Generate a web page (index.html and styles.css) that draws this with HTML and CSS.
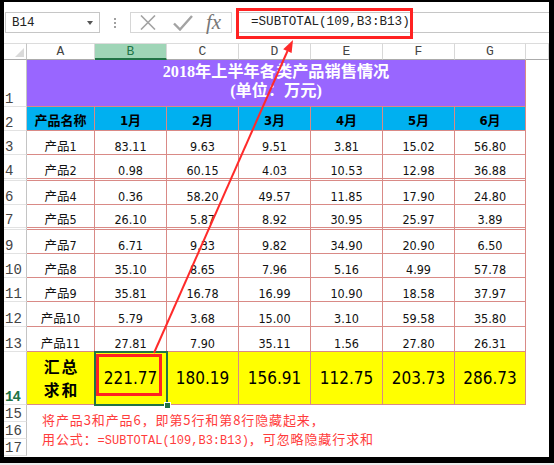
FILE: index.html
```html
<!DOCTYPE html>
<html lang="zh-CN">
<head>
<meta charset="utf-8">
<title>SUBTOTAL</title>
<link rel="stylesheet" href="styles.css">
</head>
<body>
<div class="frame">
  <div class="fbar">
    <div class="namebox"><span>B14</span><span class="caret"></span></div>
    <div class="dots"><i></i><i></i><i></i></div>
    <div class="fxbox">
      <svg class="ico-x" width="16" height="15" viewBox="0 0 16 15"><path d="M1 0.5 L15 14.5 M15 0.5 L1 14.5" stroke="#a3a3a3" stroke-width="1.6" fill="none"/></svg>
      <svg class="ico-ok" width="20" height="16" viewBox="0 0 20 16"><path d="M1 8.5 L7 14.5 L19 1" stroke="#a3a3a3" stroke-width="2.4" fill="none"/></svg>
      <span class="fx">fx</span>
    </div>
    <div class="finput">=SUBTOTAL(109,B3:B13)</div>
  </div>

  <div class="sheet">
    <div class="corner"><span class="tri"></span></div>
    <div class="ch">A</div><div class="ch chsel">B</div><div class="ch">C</div><div class="ch">D</div><div class="ch">E</div><div class="ch">F</div><div class="ch">G</div><div class="ch">&nbsp;</div>

    <div class="rh">1</div>
    <div class="c title"><span>2018年上半年各类产品销售情况</span><span>(单位：万元)</span></div>
    <div class="x"></div>

    <div class="rh">2</div>
    <div class="c hd">产品名称</div><div class="c hd">1月</div><div class="c hd">2月</div><div class="c hd">3月</div><div class="c hd">4月</div><div class="c hd">5月</div><div class="c hd">6月</div>
    <div class="x"></div>

    <div class="rh">3</div>
    <div class="c">产品1</div><div class="c">83.11</div><div class="c">9.63</div><div class="c">9.51</div><div class="c">3.81</div><div class="c">15.02</div><div class="c">56.80</div>
    <div class="x"></div>

    <div class="rh">4</div>
    <div class="c">产品2</div><div class="c">0.98</div><div class="c">60.15</div><div class="c">4.03</div><div class="c">10.53</div><div class="c">12.98</div><div class="c">36.88</div>
    <div class="x"></div>

    <div class="rh hid"></div>
    <div class="c"></div><div class="c"></div><div class="c"></div><div class="c"></div><div class="c"></div><div class="c"></div><div class="c"></div>
    <div class="x"></div>

    <div class="rh">6</div>
    <div class="c">产品4</div><div class="c">0.36</div><div class="c">58.20</div><div class="c">49.57</div><div class="c">11.85</div><div class="c">17.90</div><div class="c">24.80</div>
    <div class="x"></div>

    <div class="rh">7</div>
    <div class="c">产品5</div><div class="c">26.10</div><div class="c">5.87</div><div class="c">8.92</div><div class="c">30.95</div><div class="c">25.97</div><div class="c">3.89</div>
    <div class="x"></div>

    <div class="rh hid"></div>
    <div class="c"></div><div class="c"></div><div class="c"></div><div class="c"></div><div class="c"></div><div class="c"></div><div class="c"></div>
    <div class="x"></div>

    <div class="rh">9</div>
    <div class="c">产品7</div><div class="c">6.71</div><div class="c">9.33</div><div class="c">9.82</div><div class="c">34.90</div><div class="c">20.90</div><div class="c">6.50</div>
    <div class="x"></div>

    <div class="rh">10</div>
    <div class="c">产品8</div><div class="c">35.10</div><div class="c">8.65</div><div class="c">7.96</div><div class="c">5.16</div><div class="c">4.99</div><div class="c">57.78</div>
    <div class="x"></div>

    <div class="rh">11</div>
    <div class="c">产品9</div><div class="c">35.81</div><div class="c">16.78</div><div class="c">16.99</div><div class="c">10.90</div><div class="c">18.58</div><div class="c">37.97</div>
    <div class="x"></div>

    <div class="rh">12</div>
    <div class="c">产品10</div><div class="c">5.79</div><div class="c">3.68</div><div class="c">15.00</div><div class="c">3.10</div><div class="c">59.58</div><div class="c">35.80</div>
    <div class="x"></div>

    <div class="rh">13</div>
    <div class="c">产品11</div><div class="c">27.81</div><div class="c">7.90</div><div class="c">35.11</div><div class="c">1.56</div><div class="c">27.80</div><div class="c">26.31</div>
    <div class="x"></div>

    <div class="rh rhsel">14</div>
    <div class="c sum sumlbl"><span>汇总</span><span>求和</span></div><div class="c sum">221.77</div><div class="c sum">180.19</div><div class="c sum">156.91</div><div class="c sum">112.75</div><div class="c sum">203.73</div><div class="c sum">286.73</div>
    <div class="x"></div>

    <div class="rh">15</div>
    <div class="note"><div>将产品3和产品6，即第5行和第8行隐藏起来，</div><div>用公式：<span class="mono">=SUBTOTAL(109,B3:B13)</span>，可忽略隐藏行求和</div></div>
    <div class="x"></div>
    <div class="rh">16</div>
    <div class="x"></div>
    <div class="rh">17</div>
    <div class="x"></div>
  </div>

  <div class="redbox formula-mark"></div>
  <div class="selcell"><span class="handle"></span></div>
  <div class="redbox cell-mark"></div>
  <svg class="arrow" width="554" height="465" viewBox="0 0 554 465">
    <line x1="154" y1="353" x2="287.5" y2="51" stroke="#ff2a2a" stroke-width="2"/>
    <polygon points="293,40 291.6,53 283.2,49.2" fill="#ff2a2a"/>
  </svg>
</div>
</body>
</html>
```

FILE: styles.css
```css
html, body {
  margin: 0;
  padding: 0;
  background: #ededed;
}

.frame {
  position: relative;
  width: 554px;
  height: 463px;
  box-sizing: border-box;
  border-style: solid;
  border-color: #000;
  border-width: 2px 5px 6px 4px;
  background: #fff;
  font-family: "Liberation Mono", monospace;
  overflow: hidden;
}

/* formula bar */
.fbar {
  height: 41px;
  box-sizing: border-box;
  padding-top: 10px;
  display: flex;
  align-items: flex-start;
}

.namebox {
  margin-left: 1px;
  width: 95px;
  height: 21px;
  box-sizing: border-box;
  border: 1px solid #c6c6c6;
  display: flex;
  align-items: center;
  justify-content: space-between;
  padding: 0 6px 0 6px;
  font-size: 12.5px;
  color: #222;
}

.caret {
  width: 0;
  height: 0;
  border-left: 3.5px solid transparent;
  border-right: 3.5px solid transparent;
  border-top: 4px solid #555;
}

.dots {
  margin-left: 14px;
  width: 2px;
  height: 21px;
  display: flex;
  flex-direction: column;
  justify-content: center;
  gap: 2px;
}

.dots i {
  display: block;
  width: 2px;
  height: 2px;
  background: #a0a0a0;
}

.fxbox {
  margin-left: 14px;
  width: 102px;
  height: 21px;
  box-sizing: border-box;
  border: 1px solid #d6d6d6;
  display: flex;
  align-items: center;
  padding-left: 9px;
}

.ico-ok {
  margin-left: 17px;
}

.fx {
  margin-left: 13px;
  font-family: "Liberation Serif", serif;
  font-style: italic;
  font-size: 21px;
  line-height: 19px;
  color: #777;
}

.finput {
  margin-left: 5px;
  flex: 1;
  height: 21px;
  box-sizing: border-box;
  border: 1px solid #c6c6c6;
  border-right: none;
  padding-left: 13px;
  font-size: 12.6px;
  line-height: 19px;
  color: #222;
}

/* sheet grid */
.sheet {
  display: grid;
  grid-template-columns: 23px 68px 72px 72px 72px 72px 72px 71px 23px;
  grid-template-rows: 17px 47px 24px 24px 24px 2px 24px 23px 2px 24px 24px 24px 25px 25px 53px 17px 17px 17px;
}

.corner {
  position: relative;
  box-sizing: border-box;
  border-top: 1px solid #dcdcdc;
  border-right: 1px solid #c4c4c4;
  border-bottom: 1px solid #ababab;
}

.tri {
  position: absolute;
  right: 2px;
  bottom: 2px;
  width: 0;
  height: 0;
  border-left: 9px solid transparent;
  border-bottom: 9px solid #dadada;
}

.ch {
  box-sizing: border-box;
  border-top: 1px solid #dcdcdc;
  border-right: 1px solid #d8d8d8;
  border-bottom: 1px solid #ababab;
  display: flex;
  align-items: center;
  justify-content: center;
  font-size: 13px;
  color: #444;
}

.chsel {
  background: #9fd5b7;
  color: #217346;
  border-bottom: 2px solid #217346;
}

.rh {
  box-sizing: border-box;
  border-right: 1px solid #c4c4c4;
  border-bottom: 1px solid #e2e2e2;
  display: flex;
  align-items: flex-end;
  padding-left: 1px;
  font-size: 14px;
  line-height: 13px;
  color: #444;
}

.rhsel {
  color: #217346;
  font-weight: bold;
  letter-spacing: -1px;
}

.c {
  box-sizing: border-box;
  border-right: 1px solid #d98a86;
  border-bottom: 1px solid #d98a86;
  display: flex;
  align-items: flex-end;
  justify-content: center;
  font-family: "DejaVu Sans Condensed", "Liberation Sans", "Noto Sans CJK SC", sans-serif;
  font-size: 12.5px;
  line-height: 15px;
  color: #111;
  white-space: nowrap;
}

.title {
  grid-column: span 7;
  background: #9966ff;
  flex-direction: column;
  align-items: center;
  justify-content: center;
  font-family: "Liberation Serif", "Noto Sans CJK SC", serif;
  font-weight: bold;
  font-size: 16.2px;
  line-height: 19px;
  color: #fff;
  padding-bottom: 3px;
}

.hd {
  background: #00b0f0;
  font-weight: bold;
  font-size: 13px;
  color: #000;
  padding-bottom: 2px;
}

.sum {
  background: #ffff00;
  align-items: center;
  font-size: 17px;
  color: #000;
}

.sumlbl {
  flex-direction: column;
  font-family: "Noto Sans CJK SC", sans-serif;
  font-weight: bold;
  font-size: 15.8px;
  line-height: 23px;
  letter-spacing: 2px;
  padding-left: 2px;
}

.x {
  background: #fff;
}

.note {
  grid-column: span 7;
  grid-row: span 3;
  padding: 5px 0 0 15px;
  font-family: "Noto Sans CJK SC", sans-serif;
  font-size: 13px;
  line-height: 19px;
  letter-spacing: 0.9px;
  color: #ff3c3c;
  white-space: nowrap;
}

.mono {
  font-family: "Liberation Mono", monospace;
  font-size: 12px;
  letter-spacing: 0;
}

/* overlays */
.redbox {
  position: absolute;
  box-sizing: border-box;
  border: 3px solid #ff2222;
}

.formula-mark {
  left: 232px;
  top: 6px;
  width: 177px;
  height: 31px;
}

.cell-mark {
  left: 92px;
  top: 352px;
  width: 66px;
  height: 42px;
}

.selcell {
  position: absolute;
  left: 90px;
  top: 349px;
  width: 74px;
  height: 55px;
  box-sizing: border-box;
  border: 2px solid #217346;
}

.handle {
  position: absolute;
  right: -5px;
  bottom: -5px;
  width: 5px;
  height: 5px;
  background: #217346;
  border: 1px solid #fff;
}

.arrow {
  position: absolute;
  left: -4px;
  top: -2px;
  pointer-events: none;
}
```
